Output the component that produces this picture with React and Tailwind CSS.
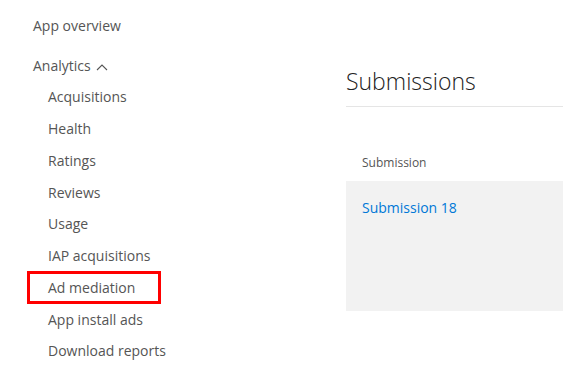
const subItems = [
  "Acquisitions",
  "Health",
  "Ratings",
  "Reviews",
  "Usage",
  "IAP acquisitions",
  "Ad mediation",
  "App install ads",
  "Download reports",
];

function ChevronUp() {
  return (
    <svg width="12" height="8" viewBox="0 0 12 8" className="ml-[5px] mt-[2px]">
      <polyline points="1,7 6,2 11,7" fill="none" stroke="#555" strokeWidth="1.1" />
    </svg>
  );
}

export default function App() {
  return (
    <div
      className="flex w-[563px] h-[369px] bg-white overflow-hidden text-[#555]"
      style={{ fontFamily: '"Segoe UI", "Open Sans", "Noto Sans", sans-serif' }}
    >
      {/* Sidebar */}
      <nav className="w-[346px] shrink-0 pl-[33px] pt-[9px] text-[14px]">
        <div className="h-[32px] flex items-center">App overview</div>
        <div className="h-[31px] mt-[9px] flex items-center">
          Analytics
          <ChevronUp />
        </div>
        <ul className="pl-[15px]">
          {subItems.map((item) => (
            <li key={item} className="h-[31.75px] flex items-center">
              {item === "Ad mediation" ? (
                <span className="-ml-[21px] h-[33px] w-[134px] pl-[18px] flex items-center border-[3px] border-[#ff0000]">
                  {item}
                </span>
              ) : (
                item
              )}
            </li>
          ))}
        </ul>
      </nav>

      {/* Main */}
      <main className="flex-1 pt-[62px]">
        <h2 className="text-[23px] leading-[38px] text-[#222] font-light">Submissions</h2>
        <div className="mt-[6px] h-px bg-[#e5e5e5]" />
        <div className="mt-[46px] pl-[16px] text-[12px] leading-[20px] text-[#555]">Submission</div>
        <div className="mt-[8px] h-[130px] bg-[#f2f2f2] pl-[16px] pt-[14px]">
          <a href="#" className="text-[14px] leading-[20px] text-[#0078d7]">
            Submission 18
          </a>
        </div>
      </main>
    </div>
  );
}
